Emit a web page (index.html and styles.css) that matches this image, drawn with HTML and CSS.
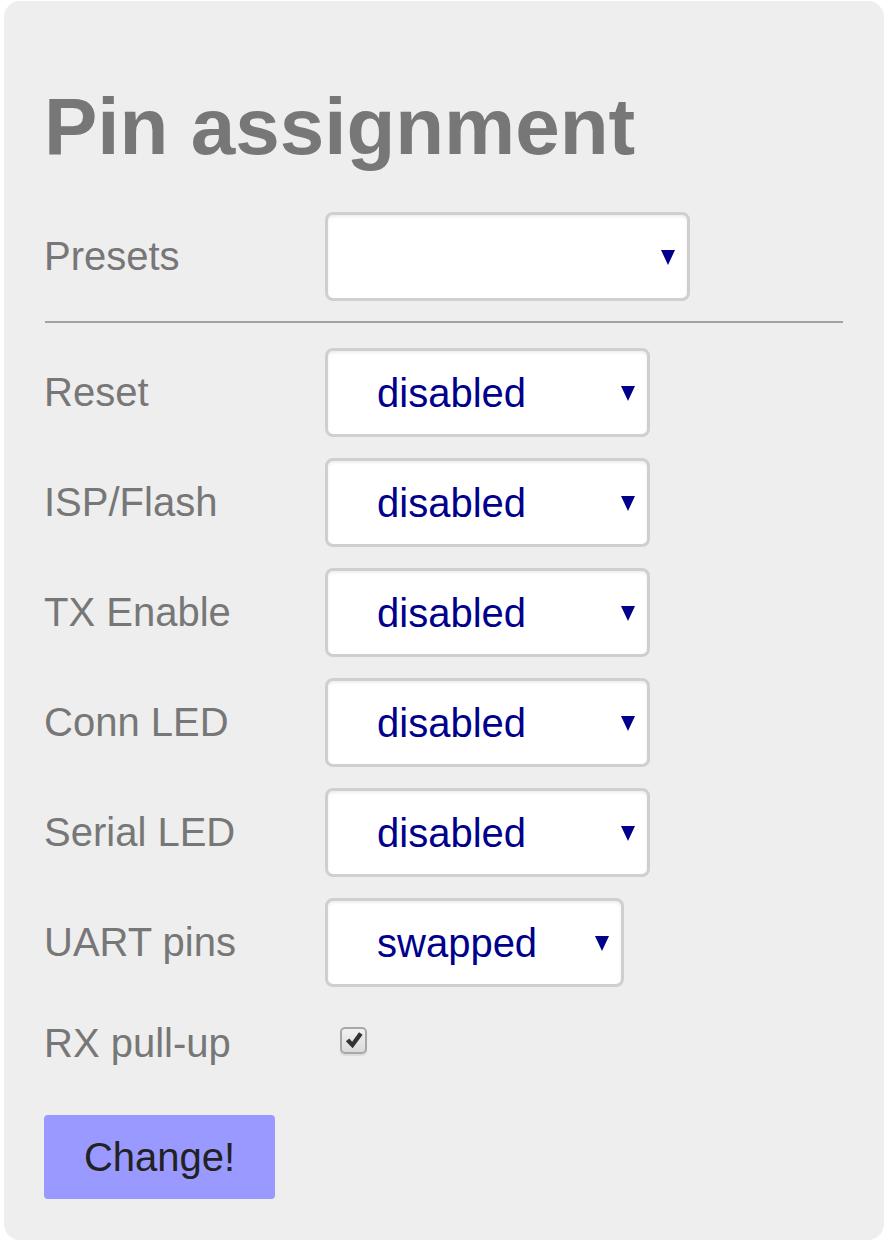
FILE: index.html
```html
<!DOCTYPE html>
<html lang="en">
<head>
<meta charset="utf-8">
<title>Pin assignment</title>
<link rel="stylesheet" href="styles.css">
</head>
<body>
<div class="card">
  <h1 class="title">Pin assignment</h1>
  <div class="row row-presets">
    <label class="label">Presets</label>
    <span class="select-wrap"><select class="select select-wide"><option></option></select></span>
  </div>
  <hr class="divider">
  <div class="row">
    <label class="label">Reset</label>
    <span class="select-wrap"><select class="select"><option>disabled</option></select></span>
  </div>
  <div class="row">
    <label class="label">ISP/Flash</label>
    <span class="select-wrap"><select class="select"><option>disabled</option></select></span>
  </div>
  <div class="row">
    <label class="label">TX Enable</label>
    <span class="select-wrap"><select class="select"><option>disabled</option></select></span>
  </div>
  <div class="row">
    <label class="label">Conn LED</label>
    <span class="select-wrap"><select class="select"><option>disabled</option></select></span>
  </div>
  <div class="row">
    <label class="label">Serial LED</label>
    <span class="select-wrap"><select class="select"><option>disabled</option></select></span>
  </div>
  <div class="row">
    <label class="label">UART pins</label>
    <span class="select-wrap"><select class="select select-narrow"><option>swapped</option></select></span>
  </div>
  <div class="row row-check">
    <label class="label">RX pull-up</label>
    <span class="checkbox"><svg viewBox="0 0 22 22" width="20" height="20"><path d="M2 12.5 L5.8 9.3 L9 13 L16.5 2.5 L20.5 5.3 L9.5 20 Z" fill="#333"/></svg></span>
  </div>
  <button class="button" type="button">Change!</button>
</div>
</body>
</html>
```
FILE: styles.css
```css
html, body {
  margin: 0;
  padding: 0;
  background: #ffffff;
}

body {
  font-family: "Liberation Sans", Arial, sans-serif;
}

.card {
  margin: 1px 1px 2px 4px;
  padding: 85px 41px 41px 40px;
  background: #eeeeee;
  border-radius: 16px;
}

.title {
  margin: 0 0 45px 0;
  font-size: 80px;
  line-height: 81px;
  font-weight: bold;
  color: #777777;
}

.row {
  display: flex;
  align-items: center;
  height: 89px;
  margin-bottom: 21px;
}

.row-presets {
  margin-bottom: 20px;
}

.label {
  width: 281px;
  flex: none;
  font-size: 40px;
  color: #777777;
}

.divider {
  margin: 0 0 25px 1px;
  border: none;
  border-top: 2px solid #a2a2a2;
  height: 0;
}

.select-wrap {
  position: relative;
  display: inline-block;
}

.select-wrap::after {
  content: "";
  position: absolute;
  right: 15px;
  top: 50%;
  margin-top: -7px;
  width: 0;
  height: 0;
  border-left: 7px solid transparent;
  border-right: 7px solid transparent;
  border-top: 15px solid #00008b;
  pointer-events: none;
}

.select {
  -webkit-appearance: none;
  appearance: none;
  box-sizing: border-box;
  width: 325px;
  height: 89px;
  padding: 0 40px 0 49px;
  border: 3px solid #cfcfcf;
  border-radius: 8px;
  background: #ffffff;
  box-shadow: inset 0 2px 3px rgba(0, 0, 0, 0.07);
  font-family: "Liberation Sans", Arial, sans-serif;
  font-size: 40px;
  color: #00008b;
  outline: none;
}

.select-wide {
  width: 365px;
}

.select-narrow {
  width: 299px;
}

.row-check {
  height: 70px;
  margin-bottom: 37px;
}

.checkbox {
  box-sizing: border-box;
  width: 27px;
  height: 27px;
  margin-left: 15px;
  margin-top: -6px;
  border: 2px solid #a8a8a8;
  border-radius: 5px;
  background: linear-gradient(#f2f2f2, #dadada);
  box-shadow: 0 2px 1px rgba(0, 0, 0, 0.08);
  display: flex;
  align-items: center;
  justify-content: center;
}

.button {
  display: block;
  width: 231px;
  height: 84px;
  padding: 0;
  border: none;
  border-radius: 4px;
  background: #9999ff;
  font-family: "Liberation Sans", Arial, sans-serif;
  font-size: 40px;
  color: #222222;
}
```
